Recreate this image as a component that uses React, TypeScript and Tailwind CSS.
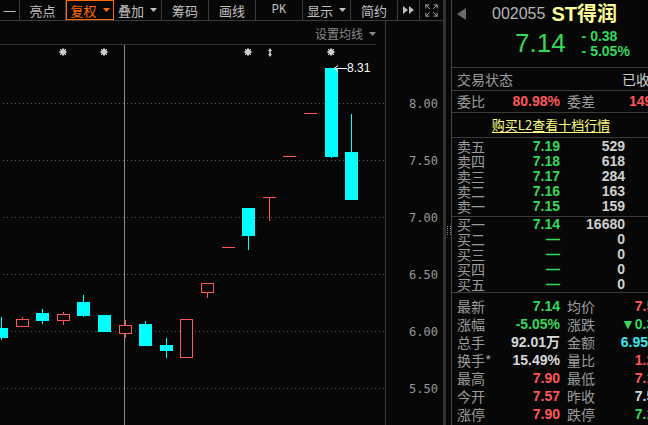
import { Expand } from 'lucide-react'

const tabs = [
  { label: '一', w: 'w-[20px]' },
  { label: '亮点', w: 'w-[46px]' },
  { label: '复权', w: 'w-[48px]', drop: true, active: true },
  { label: '叠加', w: 'w-[48px]', drop: true },
  { label: '筹码', w: 'w-[47px]' },
  { label: '画线', w: 'w-[47px]' },
  { label: 'PK', w: 'w-[47px]', mono: true },
  { label: '显示', w: 'w-[48px]', drop: true },
  { label: '简约', w: 'w-[47px]' },
]

// page coords: x, body top, body bottom, wick top, wick bottom, up(red)?
const candles: [number, number, number, number, number, boolean][] = [
  [-5, 328, 338, 317, 340, false],
  [16, 319, 326, 317, 326, true],
  [36, 313, 321, 309, 324, false],
  [57, 314, 320, 312, 325, true],
  [77, 302, 316, 295, 317, false],
  [98, 315, 332, 315, 332, false],
  [119, 325, 333, 320, 338, true],
  [139, 324, 346, 321, 346, false],
  [160, 345, 351, 338, 358, false],
  [180, 319, 357, 319, 358, true],
  [201, 283, 292, 283, 298, true],
  [222, 247, 247, 247, 247, true],
  [242, 208, 236, 208, 250, false],
  [263, 197, 197, 197, 221, true],
  [283, 156, 156, 156, 156, true],
  [304, 113, 113, 113, 113, true],
  [325, 68, 157, 68, 158, false],
  [345, 152, 200, 114, 200, false],
]

const prices = ['8.00', '7.50', '7.00', '6.50', '6.00', '5.50']
const py = (p: number) => 103 + (8 - p) * 114

const sells = [
  ['卖五', '7.19', '529'],
  ['卖四', '7.18', '618'],
  ['卖三', '7.17', '284'],
  ['卖二', '7.16', '163'],
  ['卖一', '7.15', '159'],
]
const buys = [
  ['买一', '7.14', '16680'],
  ['买二', '—', '0'],
  ['买三', '—', '0'],
  ['买四', '—', '0'],
  ['买五', '—', '0'],
]

const RED = 'text-[#ff5757]'
const GREEN = 'text-[#35d95a]'
const WHITE = 'text-[#d8d8d8]'

const stats = [
  ['最新', '7.14', GREEN, '均价', '7.51', RED],
  ['涨幅', '-5.05%', GREEN, '涨跌', '▼0.38', GREEN],
  ['总手', '92.01万', WHITE, '金额', '6.95亿', 'text-[#3ee8f0]'],
  ['换手*', '15.49%', WHITE, '量比', '1.26', RED],
  ['最高', '7.90', RED, '最低', '7.14', RED],
  ['今开', '7.57', RED, '昨收', '7.52', WHITE],
  ['涨停', '7.90', RED, '跌停', '7.14', GREEN],
]

function Caret() {
  return (
    <svg width="7" height="4" viewBox="0 0 7 4" className="ml-[6px]">
      <path d="M0 0h7L3.5 4z" fill="currentColor" />
    </svg>
  )
}

function Star({ x }: { x: number }) {
  const y = 7
  return (
    <g stroke="#cfcfcf" strokeWidth="1">
      <circle cx={x} cy={y} r="2.5" fill="#cfcfcf" />
      <line x1={x - 4} y1={y} x2={x + 4} y2={y} />
      <line x1={x} y1={y - 4} x2={x} y2={y + 4} />
      <line x1={x - 3} y1={y - 3} x2={x + 3} y2={y + 3} />
      <line x1={x - 3} y1={y + 3} x2={x + 3} y2={y - 3} />
    </g>
  )
}

export default function App() {
  const off = 45
  return (
    <div className="flex h-[425px] w-[648px] overflow-hidden bg-[#070707] font-['Noto_Sans_CJK_SC',sans-serif] text-[#c0c0c0]">
      {/* chart side */}
      <div className="flex w-[443px] shrink-0 flex-col">
        <div className="flex h-[21px] border-b border-[#3c3c3c] text-[13px] leading-none">
          {tabs.map((t) => (
            <div
              key={t.label}
              className={`${t.w} flex shrink-0 items-center justify-center ${
                t.active ? 'border border-[#ff6a00] text-[#ff6a00]' : 'border-r border-[#3c3c3c]'
              } ${t.mono ? "font-['Liberation_Mono',monospace] text-[12px]" : ''}`}
            >
              {t.label}
              {t.drop && <Caret />}
            </div>
          ))}
          <div className="flex w-[22px] items-center justify-center border-r border-[#3c3c3c] text-[#bbb]">
            <svg width="12" height="8" viewBox="0 0 12 8">
              <path d="M0 0l5 4-5 4zM6 0l5 4-5 4z" fill="currentColor" />
            </svg>
          </div>
          <div className="flex w-[22px] items-center justify-center text-[#aaa]">
            <Expand size={15} strokeWidth={1.5} />
          </div>
        </div>
        <div className="flex flex-1">
          <div className="flex w-[386px] flex-col border-r border-[#3a3a3a]">
            <div className="mr-[9px] flex h-[24px] items-center justify-end border-b border-[#333] pt-[2px] text-[12px] text-[#8a8a8a]">
              设置均线
              <Caret />
            </div>
            <svg width="385" height="380" className="block">
              {prices.map((p) => {
                const y = py(parseFloat(p)) - off + 0.5
                return <line key={p} x1="3" x2="385" y1={y} y2={y} stroke="#5a5a5a" strokeDasharray="1 3" />
              })}
              <line x1="124.5" x2="124.5" y1="0" y2="380" stroke="#8c8c8c" />
              {[63, 104, 248, 331].map((x) => (
                <Star key={x} x={x} />
              ))}
              <path d="M270 3l2 3h-1.2v3H272l-2 3-2-3h1.2V6H268z" fill="#cfcfcf" />
              {candles.map(([x, bt, bb, wt, wb, up], i) => {
                const cx = x + 6.5
                const color = up ? '#ff5757' : '#00ffff'
                const flat = bt === bb
                return (
                  <g key={i}>
                    <line x1={cx} x2={cx} y1={wt - off} y2={wb - off} stroke={color} />
                    {flat ? (
                      <line x1={x} x2={x + 13} y1={bt - off + 0.5} y2={bt - off + 0.5} stroke={color} />
                    ) : up ? (
                      <rect x={x + 0.5} y={bt - off + 0.5} width="12" height={bb - bt} fill="#070707" stroke={color} />
                    ) : (
                      <rect x={x} y={bt - off} width="13" height={bb - bt} fill={color} />
                    )}
                  </g>
                )
              })}
              <line x1="336" x2="347" y1={68 - off + 0.5} y2={68 - off + 0.5} stroke="#fff" />
              <path d={`M334 ${68 - off + 0.5}l4 -3M334 ${68 - off + 0.5}l4 3`} stroke="#fff" />
              <text x="347" y={72 - off} fill="#fff" fontSize="12" fontFamily="Liberation Sans, sans-serif">
                8.31
              </text>
            </svg>
          </div>
          <svg width="57" height="404" className="block">
            {prices.map((p) => (
              <text
                key={p}
                x="52"
                y={py(parseFloat(p)) - 21 + 5}
                textAnchor="end"
                fill="#999"
                fontSize="12"
                fontFamily="DejaVu Sans Mono, monospace"
              >
                {p}
              </text>
            ))}
          </svg>
        </div>
      </div>
      <div className="w-[3px] shrink-0 bg-[#333]" />
      <div className="flex w-[5px] shrink-0 items-center justify-center pt-[36px]">
        <svg width="4" height="9" viewBox="0 0 4 9">
          {[0, 2, 4, 6, 8].map((y) => (
            <g key={y} fill="#888">
              <rect x="0" y={y} width="1" height="1" />
              <rect x="3" y={y} width="1" height="1" />
            </g>
          ))}
        </svg>
      </div>

      {/* quote panel */}
      <div className="w-[197px] shrink-0 overflow-hidden border-l border-[#444] text-[14px] text-[#9c9c9c]">
        <div className="h-[68px] border-b border-[#3a3a3a] pt-[4px]">
          <div className="flex h-[20px] items-center whitespace-nowrap pl-[5px]">
            <svg width="9" height="12" viewBox="0 0 9 12">
              <path d="M9 0v12L0 6z" fill="#6a6a6a" />
            </svg>
            <span className="ml-[26px] font-['Liberation_Sans',sans-serif] text-[16px] text-[#b4b4b4]">002055</span>
            <span className="ml-[6px] font-['Liberation_Sans','Noto_Sans_CJK_SC',sans-serif] text-[20px] font-bold text-[#ffff99]">
              ST得润
            </span>
          </div>
          <div className="mt-[5px] flex font-['Liberation_Sans',sans-serif] text-[#35d95a]">
            <span className="ml-[63px] pt-[1px] text-[26px] leading-[26px]">7.14</span>
            <div className="ml-[16px] flex flex-col text-[14px] font-bold leading-[15px]">
              <span>- 0.38</span>
              <span>- 5.05%</span>
            </div>
          </div>
        </div>
        <div className="flex h-[23px] items-center whitespace-nowrap border-b border-[#3a3a3a] pl-[5px]">
          <span className="w-[165px] shrink-0">交易状态</span>
          <span className="text-[#ccc]">已收盘</span>
        </div>
        <div className="flex h-[22px] items-center whitespace-nowrap border-b border-[#3a3a3a] pl-[5px]">
          <span className="w-[40px] shrink-0">委比</span>
          <span className={`w-[63px] shrink-0 text-right font-['Liberation_Sans',sans-serif] font-bold ${RED}`}>80.98%</span>
          <span className="ml-[7px] w-[62px] shrink-0">委差</span>
          <span className={`font-['Liberation_Sans',sans-serif] font-bold ${RED}`}>14962</span>
        </div>
        <div className="flex h-[25px] items-center justify-center border-b border-[#3a3a3a] pl-[2px] text-[13px] text-[#ffff80] underline underline-offset-2">
          购买L2查看十档行情
        </div>
        <div className="h-[79px] border-b border-[#3a3a3a] pt-[1px]">
          {sells.map(([l, p, v]) => (
            <div key={l} className="flex h-[15px] items-center pl-[5px] leading-[15px]">
              <span className="w-[40px] shrink-0">{l}</span>
              <span className={`w-[63px] text-right font-['Liberation_Sans',sans-serif] font-bold ${GREEN}`}>{p}</span>
              <span className="w-[65px] text-right font-['Liberation_Sans',sans-serif] font-bold text-[#d0d0d0]">{v}</span>
            </div>
          ))}
        </div>
        <div className="h-[76px] border-b border-[#3a3a3a]">
          {buys.map(([l, p, v]) => (
            <div key={l} className="flex h-[15px] items-center pl-[5px] leading-[15px]">
              <span className="w-[40px] shrink-0">{l}</span>
              <span className={`w-[63px] text-right font-['Liberation_Sans',sans-serif] font-bold ${GREEN}`}>{p}</span>
              <span className="w-[65px] text-right font-['Liberation_Sans',sans-serif] font-bold text-[#d0d0d0]">{v}</span>
            </div>
          ))}
        </div>
        <div className="pt-[4px]">
          {stats.map(([l, v, c, l2, v2, c2]) => (
            <div key={l} className="flex h-[18px] w-[215px] items-center whitespace-nowrap pl-[5px]">
              <span className="w-[40px] shrink-0">{l}</span>
              <span className={`w-[63px] shrink-0 text-right font-['Liberation_Sans','Noto_Sans_CJK_SC',sans-serif] font-bold ${c}`}>{v}</span>
              <span className="ml-[7px] w-[40px] shrink-0">{l2}</span>
              <span className={`w-[55px] shrink-0 text-right font-['Liberation_Sans','Noto_Sans_CJK_SC',sans-serif] font-bold ${c2}`}>{v2}</span>
            </div>
          ))}
        </div>
      </div>
    </div>
  )
}
